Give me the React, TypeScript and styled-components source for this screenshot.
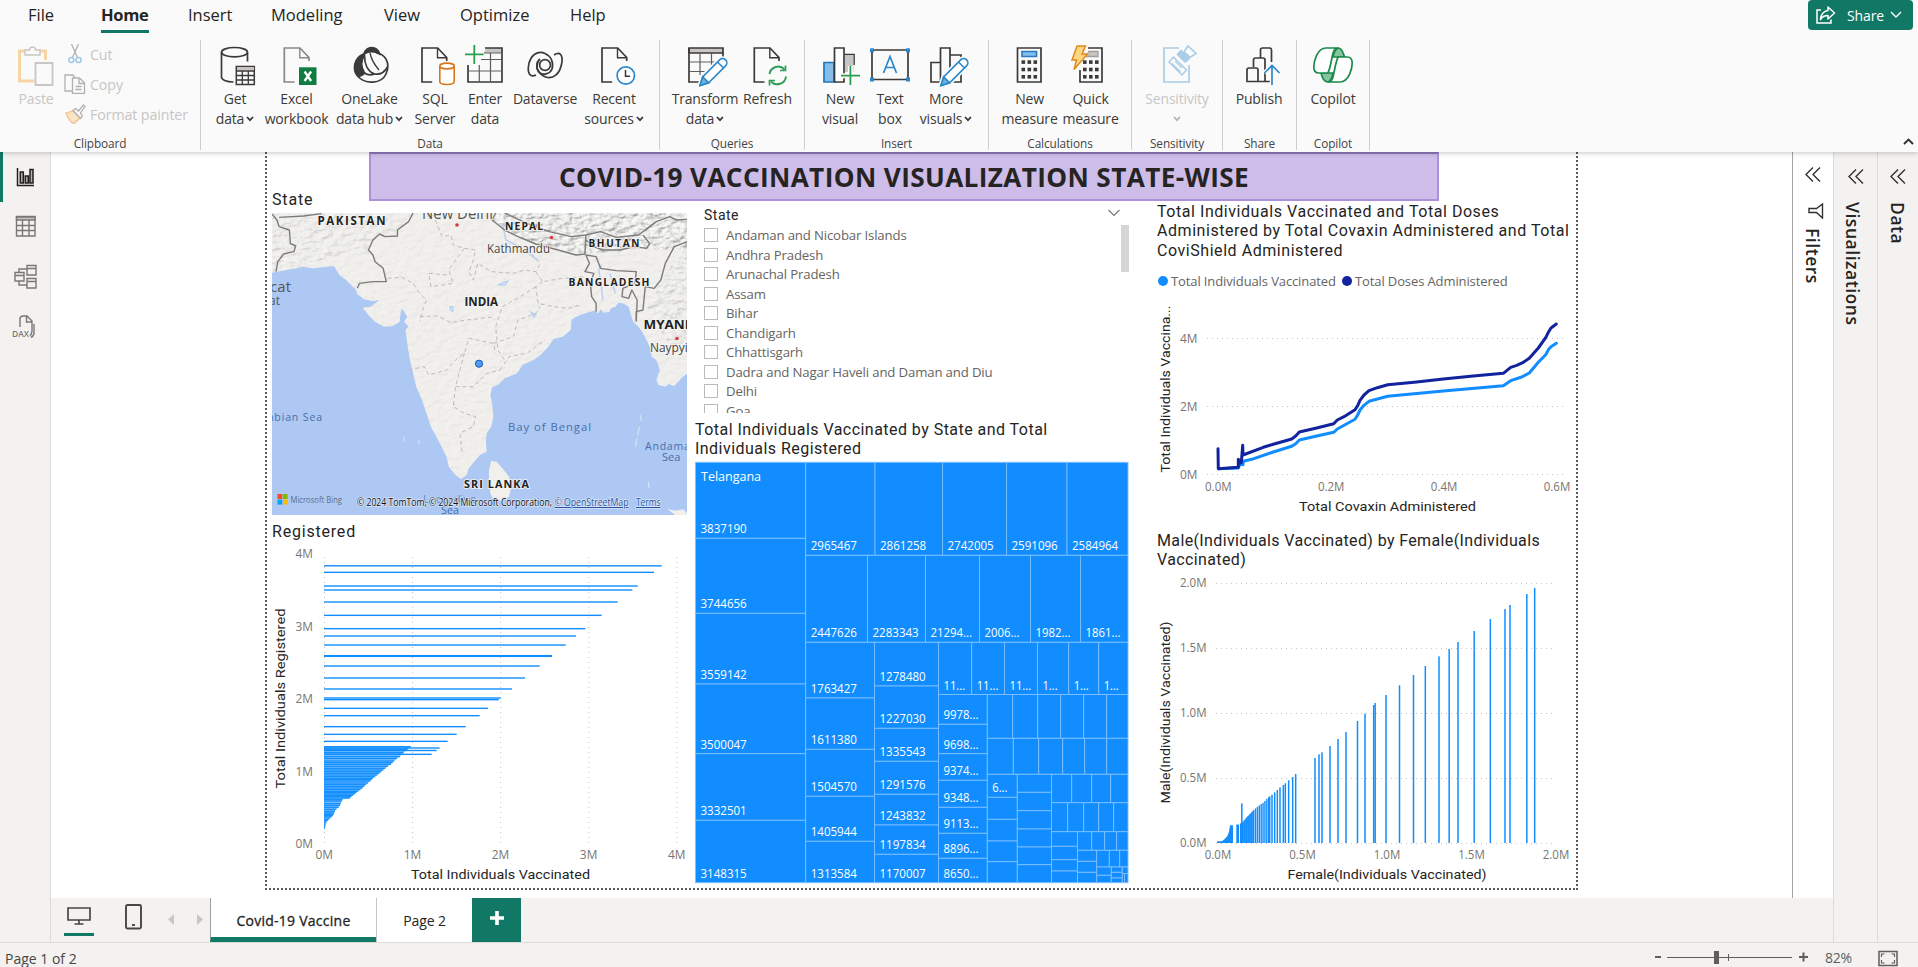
import React from "react";
import styled, { createGlobalStyle } from "styled-components";

const UI = `"Open Sans", "Noto Sans", sans-serif`;
const DIN = `Roboto, "Open Sans", sans-serif`;
const GREEN = "#117865";
const BLUE = "#118dff";
const NAVY = "#12239e";
const INK = "#252423";

const GlobalStyle = createGlobalStyle`
  * { box-sizing: border-box; }
  body { margin: 0; background: #fff; font-family: ${UI}; color: ${INK}; overflow: hidden; }
  svg { display: block; }
`;

const Shell = styled.div`
  width: 1918px;
  height: 967px;
  display: flex;
  flex-direction: column;
`;

/* ---------- ribbon ---------- */
const Ribbon = styled.header`
  height: 152px;
  background: #fafafa;
  display: flex;
  flex-direction: column;
  box-shadow: 0 1px 5px rgba(0, 0, 0, 0.22);
  position: relative;
  z-index: 2;
`;
const MenuRow = styled.nav`
  height: 40px;
  display: flex;
  align-items: flex-start;
  padding: 0 5px 0 28px;
`;
const MenuItem = styled.div<{ $w: number; $gap: number; $active?: boolean; $ls?: number }>`
  width: ${(p) => p.$w}px;
  margin-left: ${(p) => p.$gap}px;
  height: 33px;
  padding-top: 3px;
  line-height: 24px;
  font-size: 16.5px;
  letter-spacing: ${(p) => p.$ls ?? 0}px;
  white-space: nowrap;
  font-weight: ${(p) => (p.$active ? 700 : 400)};
  border-bottom: 3px solid ${(p) => (p.$active ? GREEN : "transparent")};
`;
const ShareButton = styled.button`
  margin-left: auto;
  width: 105px;
  height: 30px;
  border: 0;
  border-radius: 4px;
  background: ${GREEN};
  color: #fff;
  display: flex;
  align-items: center;
  padding: 0 10px 0 8px;
  font: 400 14px ${UI};
  span { margin: 0 6px 0 11px; letter-spacing: -0.1px; }
`;
const Groups = styled.div`
  display: flex;
  height: 110px;
`;
const Group = styled.section<{ $w: number }>`
  width: ${(p) => p.$w}px;
  border-right: 1px solid #cfcdcb;
  display: flex;
  flex-direction: column;
  justify-content: space-between;
`;
const GroupTools = styled.div`
  display: flex;
  padding-top: 5px;
`;
const GroupName = styled.div`
  text-align: center;
  font-size: 11.8px;
  line-height: 13px;
  letter-spacing: -0.1px;
  color: #444;
`;
const Tool = styled.div<{ $w: number; $gap: number; $off?: boolean }>`
  width: ${(p) => p.$w}px;
  margin-left: ${(p) => p.$gap}px;
  display: flex;
  flex-direction: column;
  align-items: center;
  color: ${(p) => (p.$off ? "#c8c6c4" : "#3b3a39")};
  > svg { overflow: visible; }
`;
const ToolLabel = styled.div`
  margin-top: 1px;
  font-size: 14px;
  line-height: 20px;
  letter-spacing: -0.18px;
  white-space: nowrap;
  text-align: center;
`;
const LabelLine = styled.div`
  display: flex;
  align-items: center;
  justify-content: center;
  gap: 2px;
  height: 20px;
`;
const ClipList = styled.div`
  margin-left: 9px;
  margin-top: -6px;
  display: flex;
  flex-direction: column;
`;
const ClipItem = styled.div`
  height: 30px;
  display: flex;
  align-items: center;
  gap: 4px;
  font-size: 14.2px;
  color: #c8c6c4;
  letter-spacing: -0.08px;
  white-space: nowrap;
`;
const Collapse = styled.div`
  margin-left: auto;
  padding: 98px 4px 0 0;
`;

/* ---------- body ---------- */
const Body = styled.main`
  height: 790px;
  display: flex;
`;
const Rail = styled.aside`
  width: 51px;
  background: #f3f2f1;
  border-right: 1px solid #dddbd9;
`;
const RailItem = styled.div<{ $active?: boolean }>`
  height: 50px;
  border-left: 3px solid ${(p) => (p.$active ? GREEN : "transparent")};
  display: flex;
  align-items: center;
  padding-left: 8px;
`;
const Center = styled.div`
  width: 1782px;
  display: flex;
  flex-direction: column;
`;
const Workspace = styled.div`
  height: 746px;
  display: flex;
  background: #fff;
`;
const Canvas = styled.div`
  width: 1741px;
  padding-left: 214px;
`;
const ReportPage = styled.div`
  width: 1313px;
  height: 738px;
  background:
    repeating-linear-gradient(180deg, #5b5b5b 0 2px, transparent 2px 4px) 0 0 / 2px 100% no-repeat,
    repeating-linear-gradient(180deg, #5b5b5b 0 2px, transparent 2px 4px) 100% 0 / 2px 100% no-repeat,
    repeating-linear-gradient(90deg, #5b5b5b 0 2px, transparent 2px 4px) 0 100% / 100% 2px no-repeat;
`;
const Banner = styled.h1`
  margin: 0 0 0 104px;
  width: 1070px;
  height: 49px;
  background: #cdbde8;
  border: 2px solid #ab90dc;
  border-top-color: #9079bd;
  display: flex;
  align-items: center;
  justify-content: center;
  font-size: 26.2px;
  font-weight: 700;
  letter-spacing: 0.37px;
  white-space: nowrap;
`;
const Visuals = styled.div`
  display: flex;
  padding-left: 7px;
`;
const LeftColumn = styled.div`
  width: 415px;
  margin-top: -12px;
`;
const MapSlot = styled.div`
  padding-top: 3.6px;
`;
const MiddleColumn = styled.div`
  width: 434px;
  margin-left: 8px;
`;
const RightColumn = styled.div`
  width: 421px;
  margin-left: 28px;
`;
const VisualTitle = styled.h2<{ $top?: number; $ls?: number; $bottom?: number }>`
  margin: ${(p) => p.$top ?? 0}px 0 ${(p) => p.$bottom ?? 0}px;
  font: 400 16px/19.4px ${DIN};
  letter-spacing: ${(p) => p.$ls ?? 0.6}px;
  white-space: pre;
`;

/* slicer */
const Slicer = styled.div`
  height: 212px;
  padding: 5px 0 0 9px;
  overflow: hidden;
`;
const SlicerHead = styled.div`
  display: flex;
  align-items: center;
  height: 18px;
  padding-right: 9px;
  justify-content: space-between;
  font: 400 14px/16px ${DIN};
  letter-spacing: 0.5px;
  svg { margin-top: -4px; }
`;
const SlicerBody = styled.div`
  display: flex;
  justify-content: space-between;
  padding-top: 1px;
`;
const Options = styled.div`
  padding-top: 0.6px;
`;
const Option = styled.label`
  height: 19.5px;
  display: flex;
  align-items: center;
  gap: 8px;
  font-size: 13.2px;
  letter-spacing: -0.15px;
  color: #666462;
  white-space: nowrap;
`;
const Box = styled.i`
  width: 14px;
  height: 14px;
  border: 1px solid #bdbbb9;
  background: #fff;
`;
const Scroll = styled.div`
  width: 8px;
  height: 47px;
  background: #d6d5d4;
`;

const Legend = styled.div`
  margin: 11px 0 2.8px;
  height: 20px;
  display: flex;
  align-items: center;
  font-size: 13px;
  color: #666462;
  white-space: nowrap;
`;
const Dot = styled.i<{ $c: string }>`
  width: 10px;
  height: 10px;
  border-radius: 50%;
  background: ${(p) => p.$c};
  margin: 0 3px 0 1px;
`;
const LegendName = styled.span<{ $w: number }>`
  width: ${(p) => p.$w}px;
  letter-spacing: -0.11px;
`;

/* side panes */
const Pane = styled.aside<{ $w: number; $white?: boolean }>`
  width: ${(p) => p.$w}px;
  background: ${(p) => (p.$white ? "#fff" : "#f3f2f1")};
  border-left: 1px solid ${(p) => (p.$white ? "#a6a4a2" : "#dddbd9")};
  display: flex;
  flex-direction: column;
  align-items: center;
  padding-top: ${(p) => (p.$white ? 15 : 17)}px;
`;
const FunnelSlot = styled.div`
  padding: 21px 0 0 5px;
`;
const PaneName = styled.div<{ $top: number; $shift?: number }>`
  margin: ${(p) => p.$top}px ${(p) => p.$shift ?? 0}px 0 0;
  writing-mode: vertical-rl;
  font-size: 17.6px;
  line-height: 22px;
  font-weight: 600;
  letter-spacing: 0.5px;
  white-space: nowrap;
`;

/* page tabs */
const PageBar = styled.div`
  height: 44px;
  background: #f3f2f1;
  display: flex;
`;
const ViewModes = styled.div`
  width: 159px;
  display: flex;
  padding-left: 13px;
`;
const Mode = styled.div<{ $active?: boolean; $gap?: number }>`
  width: 30px;
  height: 38px;
  margin-left: ${(p) => p.$gap ?? 0}px;
  border-bottom: 3px solid ${(p) => (p.$active ? GREEN : "transparent")};
  display: flex;
  justify-content: center;
  padding-top: ${(p) => (p.$active ? 9 : 6)}px;
`;
const Arrows = styled.div`
  display: flex;
  gap: 23px;
  padding: 16px 0 0 20px;
`;
const PageTab = styled.div<{ $w: number; $active?: boolean }>`
  width: ${(p) => p.$w}px;
  background: #fff;
  border-left: 1px solid ${(p) => (p.$active ? "#a19f9d" : "#c8c6c4")};
  border-bottom: ${(p) => (p.$active ? 5 : 0)}px solid ${GREEN};
  padding-bottom: ${(p) => (p.$active ? 0 : 5)}px;
  display: flex;
  align-items: center;
  justify-content: center;
  font-size: 14px;
  letter-spacing: ${(p) => (p.$active ? 0.25 : -0.1)}px;
  -webkit-text-stroke: ${(p) => (p.$active ? "0.3px" : 0)};
  padding-top: 6px;
`;
const AddTab = styled.button`
  width: 49px;
  border: 0;
  background: ${GREEN};
  display: flex;
  align-items: center;
  justify-content: center;
  padding-bottom: 6px;
`;
const StatusBar = styled.footer`
  height: 25px;
  background: #f3f2f1;
  border-top: 1px solid #dddbd9;
  display: flex;
  justify-content: space-between;
  padding: 0 20px 0 5px;
  font-size: 14px;
  line-height: 32px;
  color: #484644;
  overflow: hidden;
`;
const ZoomArea = styled.div`
  display: flex;
  align-items: flex-start;
  span { width: 53px; margin-left: 16px; color: #605e5c; letter-spacing: -0.3px; line-height: 30px; }
`;

/* ---------- icons ---------- */
type K = { children?: React.ReactNode; s?: string };
const Ico = ({ children, s = "#3b3a39" }: K) => (
  <svg width="40" height="43" viewBox="0 0 40 43" fill="none" stroke={s} strokeWidth="1.7">{children}</svg>
);
const Sheet = ({ x = 7, s }: { x?: number; s?: string }) => (
  <g transform={`translate(${x} 0)`} stroke={s}>
    <path d="M11 37H0.8V3h15.7l9 9.5V16" />
    <path d="M16.3 3v9.7h9.2" strokeWidth="1.4" />
  </g>
);
const Pencil = () => (
  <g transform="translate(15 40.5) rotate(-45)" stroke="#2b88c8" strokeWidth="1.6">
    <path d="M0 0l8-4.2h24a4.2 4.2 0 0 1 0 8.4H8z" fill="#fff" stroke="#fafafa" strokeWidth="5" />
    <path d="M0 0l8-4.2h24a4.2 4.2 0 0 1 0 8.4H8z" fill="#fff" />
    <path d="M0 0l8-4.2v8.4z" fill="#6bb1e3" />
    <path d="M29 -4.2v8.4" />
  </g>
);
const Keys = ({ x }: { x: number }) => (
  <g fill="#3b3a39" stroke="none">
    {[15.3, 22.7, 30].map((y) => [0, 6, 12].map((dx) => <rect key={y + dx} x={x + dx} y={y} width="3.6" height="3.6" />))}
  </g>
);
const Caret = ({ c = "#3b3a39" }: { c?: string }) => (
  <svg width="8" height="6" viewBox="0 0 8 6" fill="none" stroke={c} strokeWidth="1.8"><path d="M1 1l3 3.2L7 1" /></svg>
);

const icons: Record<string, React.ReactNode> = {
  paste: (
    <Ico s="#c8c6c4">
      <path d="M10 6H3.500v30H18" stroke="#f6d5a4" strokeWidth="3" />
      <path d="M23 6h6.500v9" stroke="#f6d5a4" strokeWidth="3" />
      <path d="M9 10V5h4.500c0-4 6-4 6 0H24v5z" fill="#fafafa" strokeWidth="1.4" />
      <path d="M19.500 18h17v22h-17z" fill="#fafafa" strokeWidth="1.800" />
    </Ico>
  ),
  get: (
    <Ico>
      <ellipse cx="19.5" cy="7.2" rx="13" ry="4.700" />
      <path d="M6.500 7.500v24.500c0 2.600 4.500 5 12 5M32.500 7.500v9" />
      <path d="M21.300 21.500h18v18h-18z" strokeWidth="1.500" />
      <path d="M22 22h17v3.500H22z" fill="#c8c6c4" stroke="none" />
      <path d="M21 26h18M21 30.500h18M21 35h18M27.300 26v14M33.300 26v14" strokeWidth="1.300" />
    </Ico>
  ),
  excel: (
    <Ico s="#8a8886">
      <Sheet x={6.500} />
      <rect x="22" y="22.300" width="17.500" height="17.700" fill="#107c41" stroke="none" />
      <path d="M27.600 26.500l6.500 9.500M34.100 26.500l-6.500 9.500" stroke="#fff" strokeWidth="2.300" />
    </Ico>
  ),
  onelake: (
    <Ico>
      <path d="M14 9C15 1 28 0 29.500 9c-5-3-10-3.500-15.500 0z" fill="#3b3a39" />
      <path d="M13.500 9C4 13 2 24 7.500 31c3 .5 5.500-1 7-3-3.500-6-3.500-13 0-18z" fill="#3b3a39" />
      <path d="M7.500 31c8 9 24 8 28.500-2 5-11-1-20-10-21.500" />
      <path d="M14.500 10.500c0 8 3 16 10 18.500 6 1 10.500-2.500 13-7" />
      <path d="M14.500 28c4 3 7 2 10 1" />
      <path d="M20 8c1 5 3 10 9 17" strokeWidth="1.300" />
    </Ico>
  ),
  sql: (
    <Ico>
      <Sheet x={6.200} />
      <path d="M24.800 21v15.500c0 4 14.400 4 14.400 0V21" fill="#fff" stroke="#d8761b" strokeWidth="1.600" />
      <ellipse cx="32" cy="21" rx="7.200" ry="2.900" fill="#fff" stroke="#d8761b" strokeWidth="1.600" />
    </Ico>
  ),
  enter: (
    <Ico>
      <path d="M21 3h15.500v5H19" fill="#c8c6c4" stroke="none" />
      <path d="M20 3h17v34H3V20" />
      <path d="M16 14.500h21M3 26h34M19 8h18M14.300 20v17M25.500 8v29M14 20" strokeWidth="1.200" stroke="#605e5c" />
      <path d="M9.300 0v19M0 9.300h18.600" stroke="#2a9d4f" strokeWidth="1.800" />
    </Ico>
  ),
  dataverse: (
    <Ico>
      <circle cx="20" cy="20" r="5.400" />
      <path d="M11 30C5 33 2.500 28 3.500 21 5 10 13 5 20 8.500c6 2.500 9 9 7 15.500-2 5-9 7-13 3-3-3-3-10 1-13" />
      <path d="M29 10c6-4 9 0 7.800 8C35 29 28 35 20 31.700c-6-2.500-9.500-8-7.300-15" />
    </Ico>
  ),
  recent: (
    <Ico>
      <Sheet x={7.200} />
      <circle cx="31.800" cy="30.500" r="8.700" fill="#fff" stroke="#2b88c8" />
      <path d="M31.500 25v6.200H36" strokeWidth="1.500" />
    </Ico>
  ),
  transform: (
    <Ico>
      <path d="M4 3h34v5H4z" fill="#c8c6c4" />
      <path d="M4 3v34h11M38 8v6" />
      <path d="M4 17h26M4 26.500h17M15 8v22M26.500 8v12" strokeWidth="1.200" stroke="#605e5c" />
      <Pencil />
    </Ico>
  ),
  refresh: (
    <Ico>
      <Sheet x={5.500} />
      <g stroke="#2f9e57" strokeWidth="2">
        <path d="M21.500 29a8.700 8.700 0 0 1 15-4.500M38 31.500a8.700 8.700 0 0 1-15 5" />
        <path d="M37.500 20.500v5h-5.500M21.500 40.500v-5H27" strokeWidth="1.700" />
      </g>
    </Ico>
  ),
  visual: (
    <Ico>
      <path d="M25 9.500h9V20" fill="none" />
      <path d="M25 10h8.500v17H25z" fill="#c8c6c4" stroke="none" />
      <path d="M4 17.500h10V37H4z" fill="#83beec" stroke="#2277b8" />
      <path d="M14.500 3h9.500v34h-9.500z" fill="#fff" />
      <path d="M30.400 21v19M21 30.700h19" stroke="#fafafa" strokeWidth="5" />
      <path d="M30.400 21v19M21 30.700h19" stroke="#2a9d4f" strokeWidth="1.800" />
    </Ico>
  ),
  text: (
    <Ico>
      <path d="M2 5h36v29.500H2z" strokeWidth="1.700" />
      <g fill="#2b88c8" stroke="none">
        {[[0, 3.300], [36, 3.300], [0, 32.500], [36, 32.500]].map(([x, y]) => <rect key={x + y} x={x} y={y} width="4" height="4" />)}
      </g>
      <path d="M13.500 28L20 11.500 26.500 28M15.800 22.500h8.400" stroke="#2b88c8" strokeWidth="1.700" />
    </Ico>
  ),
  more: (
    <Ico>
      <path d="M5 17.500h9.500V37H5zM14.500 3H24v34h-9.500zM24.500 10H35v27H24.500" />
      <Pencil />
    </Ico>
  ),
  measure: (
    <Ico>
      <path d="M7.500 3h23.500v34H7.500z" />
      <path d="M12 6.500h14.500v5H12z" fill="#83beec" stroke="#2b7cc0" />
      <Keys x={11.500} />
    </Ico>
  ),
  quick: (
    <Ico>
      <path d="M17 3h14v34H9V25" />
      <path d="M17 6.500h10v5H15" fill="#c8c6c4" stroke="#a19f9d" strokeWidth="1.300" />
      <Keys x={12} />
      <path d="M6 1h8.500L11 9h5.500L3 24.500 5.500 15H1z" fill="#ffd783" stroke="#e08a1e" strokeWidth="1.500" />
    </Ico>
  ),
  sensitivity: (
    <Ico s="#a9cde6">
      <path d="M22 3H7v34h25V20" />
      <path d="M12 17l4.500-5 13 13-4.500 5z" strokeWidth="1.500" />
      <path d="M15 18.500l8.500 8.500M18 16l7 7" strokeWidth="1.300" />
      <path d="M20.500 9.500L28 17l4-3-8-8.500z" fill="#a9cde6" />
      <path d="M27 7l4-6 8 7.500-6 4z" fill="#fafafa" />
    </Ico>
  ),
  publish: (
    <Ico>
      <path d="M8 36.500V25q0-2 2-2h7q2 0 2 2v11.500zM14.500 22v-7q0-2 2-2h7.500q2 0 2 2v21.500H19M21.500 12.500V5q0-2 2-2h7q2 0 2 2v12M26 36.500h5" strokeLinejoin="round" />
      <path d="M33 21v19M25.500 28l7.500-7.500 7.500 7.500" stroke="#fafafa" strokeWidth="4.500" />
      <path d="M33 21v19M25.500 28l7.500-7.500 7.500 7.500" stroke="#2b88c8" strokeWidth="1.700" />
    </Ico>
  ),
  copilot: (
    <Ico s="#1a8a4a">
      <path d="M20 12c1-5 2-8 5.500-9 4 .5 4.500 5 6 9z" fill="#84c5a0" />
      <path d="M8 28c1.500 5 2.500 8.500 7 9 3.500-1 4-5 5-9z" fill="#84c5a0" />
      <path d="M25.500 3H13C4 3 .8 17 .8 22c0 4 2 6 5 6h9c3-5 4-18 6-22q1-3 4.700-3z" fill="#fff" />
      <path d="M14.500 37H27c9 0 12.200-14 12.200-19 0-4-2-6-5-6h-9c-3 5-4 18-6 22q-1 3-4.700 3z" fill="#fff" />
    </Ico>
  ),
};

type ToolDef = { icon: string; l1: string; l2?: string; caret?: boolean; w: number; gap: number; off?: boolean };
const groups: { name: string; w: number; tools: ToolDef[] }[] = [
  { name: "Data", w: 459, tools: [
    { icon: "get", l1: "Get", l2: "data", caret: true, w: 56, gap: 6 },
    { icon: "excel", l1: "Excel", l2: "workbook", w: 65, gap: 1 },
    { icon: "onelake", l1: "OneLake", l2: "data hub", caret: true, w: 73, gap: 4 },
    { icon: "sql", l1: "SQL", l2: "Server", w: 44, gap: 7 },
    { icon: "enter", l1: "Enter", l2: "data", w: 44, gap: 6 },
    { icon: "dataverse", l1: "Dataverse", w: 66, gap: 5 },
    { icon: "recent", l1: "Recent", l2: "sources", caret: true, w: 64, gap: 4 } ] },
  { name: "Queries", w: 145, tools: [
    { icon: "transform", l1: "Transform", l2: "data", caret: true, w: 66, gap: 12 },
    { icon: "refresh", l1: "Refresh", w: 53, gap: 3 } ] },
  { name: "Insert", w: 184, tools: [
    { icon: "visual", l1: "New", l2: "visual", w: 44, gap: 13 },
    { icon: "text", l1: "Text", l2: "box", w: 32, gap: 12 },
    { icon: "more", l1: "More", l2: "visuals", caret: true, w: 60, gap: 10 } ] },
  { name: "Calculations", w: 143, tools: [
    { icon: "measure", l1: "New", l2: "measure", w: 57, gap: 12 },
    { icon: "quick", l1: "Quick", l2: "measure", w: 57, gap: 4 } ] },
  { name: "Sensitivity", w: 91, tools: [{ icon: "sensitivity", l1: "Sensitivity", l2: "", caret: true, w: 70, gap: 10, off: true }] },
  { name: "Share", w: 74, tools: [{ icon: "publish", l1: "Publish", w: 50, gap: 11 }] },
  { name: "Copilot", w: 73, tools: [{ icon: "copilot", l1: "Copilot", w: 50, gap: 11 }] },
];

const RibbonTool = ({ t }: { t: ToolDef }) => (
  <Tool $w={t.w} $gap={t.gap} $off={t.off}>
    {icons[t.icon]}
    <ToolLabel>
      <LabelLine>{t.l1}</LabelLine>
      {(t.l2 || t.caret) && <LabelLine>{t.l2}{t.caret && <Caret c={t.off ? "#b5b3b1" : undefined} />}</LabelLine>}
    </ToolLabel>
  </Tool>
);

/* ---------- chart text ---------- */
type TProps = { x: number; y: number; w?: number; children: string; size?: number; fill?: string; din?: boolean; bold?: boolean; spaced?: boolean; anchor?: "start" | "middle" | "end"; rotate?: boolean; underline?: boolean };
const T = ({ x, y, w, children, size = 12, fill = "#777573", din, bold, spaced, anchor = "start", rotate, underline }: TProps) => (
  <text
    x={x} y={y} fontSize={size} fill={fill} textAnchor={anchor}
    fontFamily={din ? DIN : UI} fontWeight={bold ? 700 : 400}
    textLength={w} lengthAdjust={w ? (spaced ? "spacing" : "spacingAndGlyphs") : undefined}
    transform={rotate ? `rotate(-90 ${x} ${y})` : undefined}
    textDecoration={underline ? "underline" : undefined}
  >{children}</text>
);

/* ---------- map ---------- */
const LAND = "M609 219H1539V700L1528 712 1510 738 1497 732 1490 740 1475 735 1470 720 1478 690 1470 660 1460 650 1455 620 1448 600 1440 580 1430 560 1418 545 1412 520 1408 500 1395 490 1385 488 1378 500 1368 505 1365 515 1352 518 1345 508 1340 520 1330 512 1310 520 1290 530 1280 540 1278 570 1260 590 1240 597 1228 620 1210 645 1195 660 1170 675 1158 700 1130 715 1115 735 1102 742 1098 765 1102 790 1105 830 1100 860 1090 880 1088 905 1090 935 1075 945 1065 960 1050 985 1045 1005 1032 1017 1020 1005 1005 980 1000 950 985 910 965 860 955 820 945 780 932 740 925 700 918 660 912 610 908 570 915 560 905 545 912 530 905 515 900 505 897 520 895 545 880 558 860 560 840 545 825 525 812 503 830 500 850 480 835 483 815 478 800 462 795 445 790 440 775 420 760 405 748 378 700 385 680 380 650 388 609 398Z";
const LANKA = "M1100 962L1112 965 1125 985 1140 1010 1145 1040 1140 1070 1125 1082 1105 1080 1098 1060 1095 1030 1095 990Z";
const HILLS = "M1110 219H1539V330L1500 330 1440 325 1390 335 1310 340 1250 330 1200 312 1160 290 1130 270 1102 240Z";
const BORDERS = [
  "M925 219L915 245 890 270 890 288 862 290 850 282 835 300 825 330 835 345 840 365 858 385 865 425 835 425 805 430 800 445",
  "M609 222L620 240 625 260 648 270 650 310 662 318 658 335 635 342 622 365 618 395M625 232L680 228 720 221",
  "M1110 219L1102 240 1130 270 1160 290 1200 312 1250 330 1290 345 1310 342 1312 285",
  "M1130 219L1180 250 1230 275 1280 290 1312 285 1345 275 1380 292 1430 285 1470 245 1500 230 1515 240 1539 238",
  "M1312 300L1330 320 1350 330 1390 330 1420 320 1448 325 1455 310 1440 285",
  "M1335 515L1335 490 1325 470 1322 430 1330 400 1310 395 1320 370 1312 345 1335 350 1345 385 1380 392 1425 395 1422 430 1395 445 1393 470 1408 475 1415 450 1427 480 1425 540",
  "M1539 305L1510 320 1490 370 1480 420 1465 445 1445 440 1440 510 1425 515 1425 545",
];
const STATES = [
  "M868 415L900 412 925 430 940 460 955 480 945 515 940 545",
  "M940 530L980 528 1010 548 1045 540 1100 532 1108 540",
  "M975 240L990 290 1010 285 1015 315 1040 325 1020 360 1005 390 1015 430 965 440 960 400 1000 405",
  "M1040 325L1065 330 1060 360 1050 395 1060 420 1070 370 1100 395 1150 400 1175 390 1200 395 1210 370 1190 340 1150 330",
  "M1200 395L1215 425 1260 415 1310 410M1215 425L1200 440 1205 490 1240 500 1275 505 1300 495M1200 440L1165 470 1125 500 1110 560 1115 630 1130 660",
  "M915 690L950 680 960 705 1000 690 1020 660 1040 640 1050 595 1105 610 1110 640",
  "M1040 640L1030 690 1020 740 1015 800 1040 820 1065 830 1060 860 1030 880 1035 940M1020 740L1060 740 1090 700 1120 690",
  "M1120 690L1140 650 1180 640 1220 600M1105 610L1150 590 1160 540 1200 520 1210 500",
];
const MapVisual = () => (
  <svg width="415" height="302" viewBox="0 0 415 302">
    <defs>
      <filter id="relief" x="0" y="0" width="100%" height="100%">
        <feTurbulence type="fractalNoise" baseFrequency="0.05 0.07" numOctaves="5" seed="8" result="n" />
        <feDiffuseLighting in="n" surfaceScale="9" lightingColor="#fff" result="l"><feDistantLight azimuth="225" elevation="58" /></feDiffuseLighting>
        <feComposite in="l" in2="SourceGraphic" operator="in" />
      </filter>
      <clipPath id="frame"><rect width="415" height="302" /></clipPath>
    </defs>
    <rect width="415" height="302" fill="#adc8f3" />
    <g clipPath="url(#frame)">
      <g transform="scale(.44643 .33333) translate(-609 -219)">
        <path d={LAND} fill="#f1f0ed" />
        <path d={LANKA} fill="#f1f0ed" />
        <path d="M1494 1106L1512 1112 1530 1108 1539 1120V1125H1512Z" fill="#f1f0ed" />
        <path d={LAND} filter="url(#relief)" opacity=".08" />
        <path d={HILLS} filter="url(#relief)" opacity=".68" />
        <path d="M609 222H925L890 270 835 300 825 340 760 345 700 380 609 395Z" filter="url(#relief)" opacity=".17" />
        <path d="M1539 310V640L1490 600 1450 500 1480 420Z" filter="url(#relief)" opacity=".28" />
        <path d="M1115 435l14-8 8-4-6 12zM1008 500l6 0 0 14-5-3zM1190 517l10 8-4 6zM1350 480l-4-50-5-40 7-15M1378 460l-12-60M1125 250l8 50 30 20 40 40" fill="none" stroke="#b9d0f2" strokeWidth="1.500" vectorEffect="non-scaling-stroke" />
        <g fill="none" stroke="#7c7b79" strokeWidth="1.400" strokeLinejoin="round">
          {BORDERS.map((d) => <path key={d} d={d} vectorEffect="non-scaling-stroke" />)}
        </g>
        <g fill="none" stroke="#bdbbb7" strokeWidth="1" strokeDasharray="4 3">
          {STATES.map((d) => <path key={d} d={d} vectorEffect="non-scaling-stroke" />)}
        </g>
        <path d="M1434 825l2 18M1432 860l-4 26M1426 895l-3 26M1452 1025l2 20M905 890v14M938 900v12" stroke="#d5e2f6" strokeWidth="1.200" vectorEffect="non-scaling-stroke" />
      </g>
      <circle cx="185" cy="12" r="1.800" fill="#d63b3b" />
      <circle cx="279.500" cy="24.500" r="1.800" fill="#d63b3b" />
      <circle cx="405" cy="125.500" r="1.800" fill="#d63b3b" />
      <g stroke="#f6f5f2" strokeWidth="2" paintOrder="stroke" strokeOpacity=".8">
        <T spaced x={45.500} y={12} w={68} size={11.500} bold fill="#222">PAKISTAN</T>
        <T x={150} y={6} w={71} size={15.500} fill="#555">New Delhi</T>
        <T spaced x={233} y={17} w={38} size={10.300} bold fill="#222">NEPAL</T>
        <T x={215} y={39.500} w={63} size={12.800} fill="#444">Kathmandu</T>
        <T spaced x={316.500} y={33.500} w={51} size={10} bold fill="#222">BHUTAN</T>
        <T spaced x={296.500} y={72.500} w={81} size={10.300} bold fill="#222">BANGLADESH</T>
        <T x={192.500} y={93} w={33.500} size={11.500} bold fill="#222">INDIA</T>
        <T x={371.500} y={116} w={72} size={12.500} bold fill="#222">MYANMAR</T>
        <T x={378} y={139} w={61} size={12.500} fill="#444">Naypyidaw</T>
        <T spaced x={192} y={275} w={65} size={10.800} bold fill="#222">SRI LANKA</T>
      </g>
      <T x={19} y={78.500} size={15} anchor="end" fill="#555">Muscat</T>
      <T x={8} y={92} size={12} anchor="end" fill="#555">Muscat</T>
      <T spaced x={-17} y={207.800} w={67} size={10.500} fill="#4a6ea9">Arabian Sea</T>
      <T spaced x={236} y={218.300} w={83} size={11.300} fill="#4a6ea9">Bay of Bengal</T>
      <T spaced x={373} y={236.500} w={52} size={10.500} fill="#4a6ea9">Andaman</T>
      <T x={390} y={247.700} w={18.500} size={10.500} fill="#4a6ea9">Sea</T>
      <T x={151} y={290} w={53} size={11} fill="#6d8cc0">Laccadive</T>
      <T x={169} y={301} w={18} size={10.500} fill="#4a6ea9">Sea</T>
      <circle cx="207" cy="150.700" r="3.600" fill="#4f9df0" stroke="#1857b8" />
      <rect x="5.500" y="281" width="4.800" height="5" fill="#f25022" /><rect x="10.900" y="281" width="4.800" height="5" fill="#7fba00" />
      <rect x="5.500" y="286.600" width="4.800" height="5" fill="#00a4ef" /><rect x="10.900" y="286.600" width="4.800" height="5" fill="#ffb900" />
      <T x={18.500} y={289.800} w={51.500} size={9.300} fill="#5e6f88">Microsoft Bing</T>
      <g stroke="#dbe6f8" strokeWidth="1.500" paintOrder="stroke">
        <T x={85} y={293} w={195} size={10} fill="#111">© 2024 TomTom, © 2024 Microsoft Corporation,</T>
        <T x={282.500} y={293} w={74} size={10} fill="#2b4f9e" underline>© OpenStreetMap</T>
        <T x={364} y={293} w={24.500} size={10} fill="#2b4f9e" underline>Terms</T>
      </g>
    </g>
  </svg>
);

/* ---------- registered chart ---------- */
const regBars: [number, number][] = [
  [167.5, 1205], [187, 1182], [228, 1133], [240, 1117], [276, 1073], [316, 1025], [356, 976], [378, 948], [405, 917], [437, 876], [439, 876], [468, 839], [504, 795], [537, 756], [564, 722], [569, 716], [595, 684], [617, 659], [650, 617], [673, 590], [694, 563], [714, 539], [721.5, 530], [733, 515],
];
const regDense: [number, number][] = [
  [710, 452], [718, 442], [728, 430], [740, 419], [745, 411], [753, 402], [763, 392], [769, 383], [776, 374], [785, 363], [795, 351], [805, 338], [815, 328], [825, 316], [835, 306], [848, 288], [860, 273], [866, 267], [868, 247], [880, 242], [890, 237], [900, 226], [915, 219], [925, 210], [933, 201], [940, 197], [957, 194],
];
const lerp = (pts: [number, number][], v: number) => {
  for (let i = 1; i < pts.length; i++) {
    if (v <= pts[i][0]) {
      const [a, b] = [pts[i - 1], pts[i]];
      return a[1] + ((b[1] - a[1]) * (v - a[0])) / (b[0] - a[0]);
    }
  }
  return pts[pts.length - 1][1];
};
const denseRows = [710, 718, 728, 733, 740, 745.5, 753, 758, 763, 769, 775, 780, 785, 790, 795, 800, 805, 809, 813, 819, 824, 829, 834, 839, 844, 848, 852, 856, 860, 864, 869, 873, 881, 886, 892, 898, 904, 909, 913, 917, 921, 927, 931, 936, 942, 948, 954];
const grid = { stroke: "#c8c6c4", strokeWidth: 1, strokeDasharray: "1 4" };
const RegisteredChart = () => (
  <svg width="415" height="343" viewBox="272 541 415 343">
    {[0, 1, 2, 3, 4].map((i) => (
      <g key={i}>
        <line x1={324.5 + i * 88.1} x2={324.5 + i * 88.1} y1={557} y2={844} {...grid} />
        <T x={313} y={848 - i * 72.500} w={17.500} anchor="end">{`${i}M`}</T>
        <T x={324.300 + i * 88.100} y={859} w={17.500} anchor="middle">{`${i}M`}</T>
      </g>
    ))}
    <g fill={BLUE}>
      {regBars.map(([y, x]) => <rect key={y} x={324} y={510 + y / 3 - 0.7} width={(x - 192) / 3} height={1.400} />)}
      <path opacity=".6" d={`M324 746.500${regDense.map(([y, x]) => `L${260 + x / 3} ${510 + y / 3}`).join("")}L324 829Z`} />
      {denseRows.map((y) => <rect key={y} x={324} y={510 + y / 3 - 0.6} width={(lerp(regDense, y) - 191) / 3} height={1.200} />)}
    </g>
    <T din x={500.500} y={879} w={179} size={13.300} anchor="middle" fill={INK}>Total Individuals Vaccinated</T>
    <T din x={285} y={698.500} w={180} size={13.300} anchor="middle" fill={INK} rotate>Total Individuals Registered</T>
  </svg>
);

/* ---------- treemap ---------- */
const X0 = 695.5, X1 = 1128, Y0 = 462.3, Y1 = 882.7;
type Cell = [number, number, number, number, string?];
const column = (x1: number, x2: number, ys: number[], labels: string[] = []): Cell[] =>
  ys.slice(1).map((y, i) => [x1, ys[i], x2, y, labels[i]] as Cell);
const row = (y1: number, y2: number, xs: number[], labels: string[] = []): Cell[] =>
  xs.slice(1).map((x, i) => [xs[i], y1, x, y2, labels[i]] as Cell);
const cells: Cell[] = [
  ...column(X0, 805.7, [Y0, 538.3, 613.3, 684, 753.7, 820.3, Y1], ["3837190", "3744656", "3559142", "3500047", "3332501", "3148315"]),
  ...row(Y0, 555.3, [805.7, 875, 942.5, 1006.5, 1067, X1], ["2965467", "2861258", "2742005", "2591096", "2584964"]),
  ...row(555.3, 642.3, [805.7, 867.5, 925.5, 979.5, 1030.5, 1080.5, X1], ["2447626", "2283343", "21294...", "2006...", "1982...", "1861..."]),
  ...column(805.7, 874.5, [642.3, 698, 749.3, 796.3, 841.3, Y1], ["1763427", "1611380", "1504570", "1405944", "1313584"]),
  ...column(874.5, 938.5, [642.3, 686, 728.3, 761.3, 794.3, 825, 854.3, Y1], ["1278480", "1227030", "1335543", "1291576", "1243832", "1197834", "1170007"]),
  ...row(642.3, 694.5, [938.5, 971.7, 1004.5, 1037.5, 1068.7, 1098.7, X1], ["11...", "11...", "11...", "1...", "1...", "1..."]),
  ...column(938.5, 987.3, [694.5, 724.3, 753.7, 780.3, 807.3, 833.3, 858.3, Y1], ["9978...", "9698...", "9374...", "9348...", "9113...", "8896...", "8650..."]),
  ...row(694.5, 738.3, [987.3, 1012.7, 1037.7, 1060.7, 1083.7, 1106.7, X1]),
  ...row(738.3, 774.3, [987.3, 1013.3, 1038.7, 1062.7, 1084.7, 1106.7, X1]),
  ...column(987.3, 1017.3, [774.3, 797.3, 819.3, 841, 861.7, Y1], ["6..."]),
  ...column(1017.3, 1051.5, [774.3, 792.3, 810.7, 829, 847, 864.7, Y1]),
  ...row(774.3, 802.7, [1051.5, 1071.7, 1091.7, 1110.7, X1]),
  ...row(802.7, 831.7, [1051.5, 1067.7, 1083.7, 1098.7, 1113.7, X1]),
  ...column(1051.5, 1077.5, [831.7, 846.3, 859.7, 871, Y1]),
  ...row(831.7, 850.3, [1077.5, 1091.7, 1104.7, 1116.7, X1]),
  ...column(1077.5, 1096.7, [850.3, 861.3, 872.3, Y1]),
  ...row(850.3, 867, [1096.7, 1109.3, 1119.7, X1]),
  ...column(1096.7, 1111.3, [867, 875.3, Y1]),
  ...column(1111.3, 1122.3, [867, 872.3, 878, Y1]),
  ...row(867, 873.5, [1122.3, X1]),
  ...row(873.5, Y1, [1122.3, 1124.5, X1]),
];
const labelWidth = (s: string) => (s.endsWith("...") ? (s.length - 3) * 6.6 + 8.5 : s.length * 6.6);
const Treemap = () => (
  <svg width="434" height="424" viewBox="695 460 434 424">
    {cells.map(([x1, y1, x2, y2, label], i) => (
      <g key={i}>
        <rect x={x1} y={y1} width={x2 - x1} height={y2 - y1} fill={BLUE} stroke="#7ebfff" strokeWidth=".9" />
        {label && <T x={x1 + 5} y={y2 - 5} w={labelWidth(label)} size={12} fill="#fff">{label}</T>}
      </g>
    ))}
    <T x={701} y={481} w={60} size={12.800} fill="#fff">Telangana</T>
  </svg>
);

/* ---------- line chart ---------- */
const toPath = (pts: number[][]) => "M" + pts.map(([x, y]) => `${(1140 + x / 3).toFixed(1)} ${(190 + y / 3).toFixed(1)}`).join("L");
const doses = [[234, 776], [235, 836], [295, 832], [295, 808], [299, 820], [304, 818], [308, 766], [309, 795], [370, 772], [400, 763], [455, 747], [467, 738], [478, 726], [530, 714], [581, 701], [592, 690], [612, 680], [645, 659], [653, 647], [660, 631], [672, 615], [687, 602], [712, 593], [743, 584], [830, 576], [910, 567], [1000, 558], [1090, 550], [1112, 532], [1130, 526], [1150, 517], [1168, 505], [1195, 474], [1217, 443], [1226, 425], [1233, 414], [1249, 402]];
const people = [[235, 836], [295, 834], [300, 822], [309, 824], [310, 814], [335, 808], [400, 786], [455, 769], [467, 761], [478, 750], [530, 738], [581, 727], [592, 717], [645, 688], [653, 675], [660, 660], [672, 646], [687, 634], [743, 619], [910, 603], [1090, 587], [1112, 572], [1145, 561], [1168, 549], [1195, 517], [1217, 494], [1226, 478], [1233, 470], [1249, 460]];
const LineChart = () => (
  <svg width="421" height="225" viewBox="1157 294 421 225">
    {["0M", "2M", "4M"].map((l, i) => (
      <g key={l}>
        <line x1={1207} x2={1567} y1={474.5 - i * 68} y2={474.5 - i * 68} {...grid} />
        <T x={1197.500} y={478.700 - i * 68.100} w={17.500} anchor="end">{l}</T>
      </g>
    ))}
    {["0.0M", "0.2M", "0.4M", "0.6M"].map((l, i) => <T key={l} x={1218.300 + i * 112.900} y={491} w={26.500} anchor="middle">{l}</T>)}
    <g fill="none" strokeWidth="3" strokeLinejoin="round" strokeLinecap="round">
      <path d={toPath(people)} stroke={BLUE} />
      <path d={toPath(doses)} stroke={NAVY} />
    </g>
    <T din x={1387.500} y={511} w={177} size={13.300} anchor="middle" fill={INK}>Total Covaxin Administered</T>
    <T din x={1170} y={389} w={167} size={13.300} anchor="middle" fill={INK} rotate>Total Individuals Vaccina...</T>
  </svg>
);

/* ---------- gender chart ---------- */
const genderBars: [number, number][] = [
  [1184, 204], [1160.5, 222], [1110, 255], [1095, 267], [1051, 297], [1002.5, 333], [954, 366], [927.5, 387], [897, 409], [856, 438], [820.5, 465], [778.5, 496], [738, 525], [705.5, 549], [701, 555], [675, 581], [652.5, 603], [618, 636], [594, 657], [570, 678], [546, 697], [537, 703], [525, 714], [467, 762], [458, 771], [446, 781], [436, 790], [430, 795], [420, 802], [412, 810], [404, 817], [396, 824], [389, 829], [305.5, 850],
];
const slope: [number, number][] = [[300, 912], [310, 905], [320, 892], [330, 882], [340, 871], [355, 858], [370, 848], [381, 836], [389, 829]];
const foot: [number, number][] = [[231, 964], [245, 964], [252, 959], [262, 948], [267, 935], [270, 916], [279, 916]];
const GenderChart = () => (
  <svg width="421" height="315" viewBox="1157 570 421 315">
    {["0.0M", "0.5M", "1.0M", "1.5M", "2.0M"].map((l, i) => (
      <g key={l}>
        <line x1={1216} x2={1555} y1={843.5 - i * 65} y2={843.5 - i * 65} {...grid} />
        <T x={1206.500} y={847.300 - i * 65} w={26.500} anchor="end">{l}</T>
        <T x={1218 + i * 84.500} y={859} w={26.500} anchor="middle">{l}</T>
      </g>
    ))}
    <g fill={BLUE}>
      {genderBars.map(([x, t]) => <rect key={x} x={1140 + x / 3 - 0.75} y={520 + t / 3} width={1.500} height={(969 - t) / 3} />)}
      <path d={`M${foot.map(([x, y]) => `${1140 + x / 3} ${520 + y / 3}`).join("L")}V843H1217Z`} />
      <path d="M1236.300 824.500H1239V843H1236.300Z" />
      <path opacity=".8" d={`M1240 824.300${slope.filter(([x]) => x < 345).map(([x, y]) => `L${1140 + x / 3} ${520 + y / 3}`).join("")}V843H1240Z`} />
      {Array.from({ length: 16 }, (_, i) => 302 + i * 5.6).map((x) => {
        const t = lerp(slope, x);
        return <rect key={x} x={1140 + x / 3 - 0.7} y={520 + t / 3} width={1.400} height={(969 - t) / 3} />;
      })}
    </g>
    <T din x={1387} y={879} w={199} size={13.300} anchor="middle" fill={INK}>Female(Individuals Vaccinated)</T>
    <T din x={1170} y={712.500} w={182} size={13.300} anchor="middle" fill={INK} rotate>Male(Individuals Vaccinated)</T>
  </svg>
);

const DoubleChevron = () => (
  <svg width="16" height="15" viewBox="0 0 16 15" fill="none" stroke="#323130" strokeWidth="1.400"><path d="M8 .5l-7 7 7 7M15 .5l-7 7 7 7" /></svg>
);

const states = ["Andaman and Nicobar Islands", "Andhra Pradesh", "Arunachal Pradesh", "Assam", "Bihar", "Chandigarh", "Chhattisgarh", "Dadra and Nagar Haveli and Daman and Diu", "Delhi", "Goa"];

export default function App() {
  return (
    <Shell>
      <GlobalStyle />
      <Ribbon>
        <MenuRow>
          <MenuItem $w={26} $gap={0}>File</MenuItem>
          <MenuItem $w={48} $gap={47} $active $ls={-0.35}>Home</MenuItem>
          <MenuItem $w={44} $gap={39}>Insert</MenuItem>
          <MenuItem $w={73} $gap={39}>Modeling</MenuItem>
          <MenuItem $w={37} $gap={40}>View</MenuItem>
          <MenuItem $w={71} $gap={39}>Optimize</MenuItem>
          <MenuItem $w={37} $gap={39}>Help</MenuItem>
          <ShareButton>
            <svg width="20" height="18" viewBox="0 0 20 18" fill="none" stroke="#fff" strokeWidth="1.500">
              <path d="M5 4H1v13h14v-3.500" />
              <path d="M12 1l6.500 6-6.500 6V9.500C8.500 9.500 6 11 4.500 13.500 5 8 8 5 12 4.500z" strokeLinejoin="round" />
            </svg>
            <span>Share</span>
            <svg width="12" height="8" viewBox="0 0 12 8" fill="none" stroke="#fff" strokeWidth="1.400"><path d="M1 1l5 5 5-5" /></svg>
          </ShareButton>
        </MenuRow>
        <Groups>
          <Group $w={201}>
            <GroupTools>
              <Tool $w={38} $gap={17} $off>
                {icons.paste}
                <ToolLabel>Paste</ToolLabel>
              </Tool>
              <ClipList>
                <ClipItem>
                  <svg width="22" height="20" viewBox="0 0 22 20" fill="none" stroke="#b3b1af" strokeWidth="1.300">
                    <path d="M7.500 0l6 13.500M14.500 0l-6 13.500" />
                    <g stroke="#a3cbe8" strokeWidth="1.700"><circle cx="7.300" cy="16" r="2.500" /><circle cx="14.500" cy="16" r="2.500" /></g>
                  </svg>Cut
                </ClipItem>
                <ClipItem>
                  <svg width="22" height="20" viewBox="0 0 22 20" fill="none" stroke="#b3b1af" strokeWidth="1.300">
                    <path d="M8 17H1V1h8l2 2.500" /><path d="M8.500 4h7l5 5v10.500h-12z" fill="#fafafa" /><path d="M15 4v5.500h5M11.500 12.500h6M11.500 15.500h6" />
                  </svg>Copy
                </ClipItem>
                <ClipItem>
                  <svg width="22" height="20" viewBox="0 0 22 20" fill="none" stroke="#b3b1af" strokeWidth="1.300">
                    <path d="M2 9l7-2 7 7-6 5.500c-3-1-6-5-8-10.500z" fill="#fbe3c6" stroke="#eec08d" />
                    <path d="M9 6.500l2.500-2 3 2.500L19.500 1l1.500 1.500L16.500 9l2 3-2 2.500z" fill="#fafafa" />
                  </svg>Format painter
                </ClipItem>
              </ClipList>
            </GroupTools>
            <GroupName>Clipboard</GroupName>
          </Group>
          {groups.map((g) => (
            <Group key={g.name} $w={g.w}>
              <GroupTools>{g.tools.map((t) => <RibbonTool key={t.icon} t={t} />)}</GroupTools>
              <GroupName>{g.name}</GroupName>
            </Group>
          ))}
          <Collapse>
            <svg width="11" height="7" viewBox="0 0 11 7" fill="none" stroke="#323130" strokeWidth="1.900"><path d="M1 6l4.500-4.500L10 6" /></svg>
          </Collapse>
        </Groups>
      </Ribbon>

      <Body>
        <Rail>
          <RailItem $active>
            <svg width="28" height="24" viewBox="0 0 28 24" fill="none" stroke="#201f1e" strokeWidth="1.500">
              <path d="M6.500 3v17.500H23" /><path d="M9.300 7h3v11h-3zM14.300 11h3v7h-3zM19 4.500h3V18h-3z" fill="#b5b3b1" />
            </svg>
          </RailItem>
          <RailItem>
            <svg width="28" height="24" viewBox="0 0 28 24" fill="none" stroke="#7a7876" strokeWidth="1.400">
              <path d="M5.500 1.500h18.500v19.500H5.500z" /><path d="M5.500 2h18.500v3H5.500z" fill="#c8c6c4" /><path d="M5.500 10.500h18.500M5.500 15.500h18.500M11.500 5v16M18 5v16" />
            </svg>
          </RailItem>
          <RailItem>
            <svg width="28" height="26" viewBox="0 0 28 26" fill="none" stroke="#7a7876" strokeWidth="1.400">
              <path d="M16 1.500h9v9.500h-9zM16 4.500h9M16 14.500h9V24h-9zM16 17.500h9M4 8.500h9V17H4zM4 11.500h9M8 8.500V5h8M8 17v4h8" />
            </svg>
          </RailItem>
          <RailItem>
            <svg width="28" height="24" viewBox="0 0 28 24" fill="none" stroke="#7a7876" strokeWidth="1.400">
              <path d="M9 12V4q0-3 3-3h4l5 5v10q0 3-2 5M15.500 1v6H21M23 9v9q0 3-3 4.500" />
              <text x="1" y="21.500" fontSize="9" stroke="none" fill="#7a7876" fontFamily={UI} fontWeight="600" textLength="17" lengthAdjust="spacingAndGlyphs">DAX</text>
            </svg>
          </RailItem>
        </Rail>

        <Center>
          <Workspace>
            <Canvas>
              <ReportPage>
                <Banner>COVID-19 VACCINATION VISUALIZATION STATE-WISE</Banner>
                <Visuals>
                  <LeftColumn>
                    <VisualTitle $top={1} $ls={0.85}>State</VisualTitle>
                    <MapSlot><MapVisual /></MapSlot>
                    <VisualTitle $top={7} $ls={0.8}>Registered</VisualTitle>
                    <RegisteredChart />
                  </LeftColumn>
                  <MiddleColumn>
                    <Slicer>
                      <SlicerHead>
                        State
                        <svg width="12" height="8" viewBox="0 0 12 8" fill="none" stroke="#7a7876" strokeWidth="1.200"><path d="M.5 1L6 6.500 11.500 1" /></svg>
                      </SlicerHead>
                      <SlicerBody>
                        <Options>{states.map((s) => <Option key={s}><Box />{s}</Option>)}</Options>
                        <Scroll />
                      </SlicerBody>
                    </Slicer>
                    <VisualTitle $top={7} $bottom={1} $ls={0.46}>{"Total Individuals Vaccinated by State and Total\nIndividuals Registered"}</VisualTitle>
                    <Treemap />
                  </MiddleColumn>
                  <RightColumn>
                    <VisualTitle $top={1} $ls={0.55}>{"Total Individuals Vaccinated and Total Doses\nAdministered by Total Covaxin Administered and Total\nCoviShield Administered"}</VisualTitle>
                    <Legend>
                      <Dot $c={BLUE} /><LegendName $w={170}>Total Individuals Vaccinated</LegendName>
                      <Dot $c={NAVY} /><LegendName $w={160}>Total Doses Administered</LegendName>
                    </Legend>
                    <LineChart />
                    <VisualTitle $top={11.5} $bottom={0.7} $ls={0.37}>{"Male(Individuals Vaccinated) by Female(Individuals\nVaccinated)"}</VisualTitle>
                    <GenderChart />
                  </RightColumn>
                </Visuals>
              </ReportPage>
            </Canvas>
            <Pane $w={41} $white>
              <DoubleChevron />
              <FunnelSlot>
                <svg width="16" height="16" viewBox="0 0 16 16" fill="none" stroke="#323130" strokeWidth="1.400">
                  <path d="M14.500 1v14L8.500 9.500H1v-4h7.500z" />
                </svg>
              </FunnelSlot>
              <PaneName $top={9}>Filters</PaneName>
            </Pane>
          </Workspace>
          <PageBar>
            <ViewModes>
              <Mode $active>
                <svg width="24" height="18" viewBox="0 0 24 18" fill="none" stroke="#484644" strokeWidth="1.700"><path d="M1 1h22v12H1zM12 13v4M7.500 17h9" /></svg>
              </Mode>
              <Mode $gap={24}>
                <svg width="17" height="26" viewBox="0 0 17 26" fill="none" stroke="#484644" strokeWidth="1.900"><rect x="1" y="1" width="15" height="23.500" rx="1.500" /><path d="M7 21h3" /></svg>
              </Mode>
              <Arrows>
                <svg width="6" height="11" viewBox="0 0 6 11"><path d="M6 0v11L0 5.500z" fill="#c8c6c4" /></svg>
                <svg width="6" height="11" viewBox="0 0 6 11"><path d="M0 0v11l6-5.500z" fill="#c8c6c4" /></svg>
              </Arrows>
            </ViewModes>
            <PageTab $w={166} $active>Covid-19 Vaccine</PageTab>
            <PageTab $w={96}>Page 2</PageTab>
            <AddTab><svg width="14" height="14" viewBox="0 0 14 14" stroke="#fff" strokeWidth="3.600"><path d="M7 0v14M0 7h14" /></svg></AddTab>
          </PageBar>
        </Center>

        <Pane $w={44}>
          <DoubleChevron />
          <PaneName $top={18} $shift={6}>Visualizations</PaneName>
        </Pane>
        <Pane $w={41}>
          <DoubleChevron />
          <PaneName $top={18} $shift={1}>Data</PaneName>
        </Pane>
      </Body>

      <StatusBar>
        <div>Page 1 of 2</div>
        <ZoomArea>
          <svg width="155" height="24" viewBox="0 0 155 24" fill="none" stroke="#605e5c">
            <path d="M1 14h6M145 14h9M149.500 9.500v9" strokeWidth="2" />
            <path d="M13 14.500h125M74.500 11v7" />
            <path d="M62.500 8v13" strokeWidth="5" />
          </svg>
          <span>82%</span>
          <svg width="20" height="24" viewBox="0 0 20 24" fill="none" stroke="#605e5c" strokeWidth="1.500">
            <path d="M1 8.500h18v14H1z" /><path d="M3.500 14v-3h3M16.500 14v-3h-3M3.500 17v3h3M16.500 17v3h-3" strokeWidth="1.200" />
          </svg>
        </ZoomArea>
      </StatusBar>
    </Shell>
  );
}
